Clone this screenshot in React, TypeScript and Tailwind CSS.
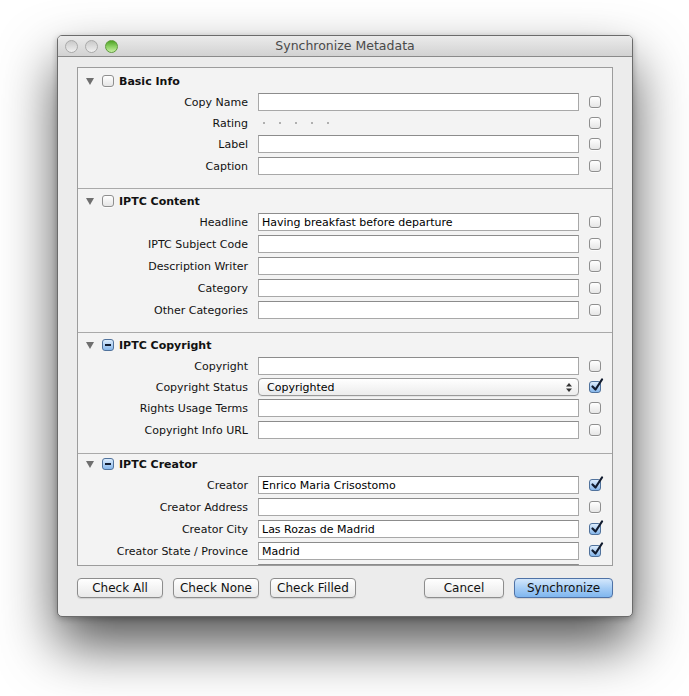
import React from "react";

type CS = "off" | "on" | "mixed";

function Check({ state = "off" }: { state?: CS }) {
  if (state === "off") {
    return (
      <div className="w-[12px] h-[12px] rounded-[3px] border border-[#8f8f8f] bg-gradient-to-b from-white to-[#e6e6e6] shadow-[0_1px_0_rgba(255,255,255,0.7)]" />
    );
  }
  return (
    <div className="relative w-[12px] h-[12px] rounded-[3px] border border-[#50729c] bg-gradient-to-b from-[#dcecfc] to-[#86b6ea]">
      {state === "on" ? (
        <svg className="absolute left-[1px] top-[-4px]" width="13" height="14" viewBox="0 0 13 14">
          <path d="M1.5 8.5 L4.5 11.5 L11 1.5" fill="none" stroke="#111b2e" strokeWidth="2.2" strokeLinecap="round" strokeLinejoin="round" />
        </svg>
      ) : (
        <div className="absolute left-[2px] top-[4px] w-[6px] h-[2px] bg-[#121c30]" />
      )}
    </div>
  );
}

function Tri() {
  return (
    <svg width="8" height="7" viewBox="0 0 8 7">
      <polygon points="0,0 8,0 4,7" fill="#6f6f6f" />
    </svg>
  );
}

function Input({ value = "" }: { value?: string }) {
  return (
    <div className="h-[18px] w-[321px] border border-[#a8a8a8] border-t-[#8c8c8c] bg-white text-[11px] leading-none px-[3px] flex items-center text-black">
      {value}
    </div>
  );
}

function Row({
  label,
  children,
  h = "h-[22px]",
  state = "off",
}: {
  label: string;
  children: React.ReactNode;
  h?: string;
  state?: CS;
}) {
  return (
    <div className={`flex items-center ${h}`}>
      <div className="w-[170px] text-right text-[11px] text-[#111] leading-none whitespace-nowrap">{label}</div>
      <div className="ml-[10px] w-[321px]">{children}</div>
      <div className="ml-[10px]">
        <Check state={state} />
      </div>
    </div>
  );
}

function Header({ title, state = "off" }: { title: string; state?: CS }) {
  return (
    <div className="flex items-center h-[20px] pl-[8px]">
      <Tri />
      <div className="ml-[8px]">
        <Check state={state} />
      </div>
      <div className="ml-[5px] text-[11px] font-bold text-[#111] leading-none">{title}</div>
    </div>
  );
}

function Btn({ children, w, primary = false }: { children: React.ReactNode; w: string; primary?: boolean }) {
  return (
    <div
      className={`${w} h-[20px] rounded-[4px] border flex items-center justify-center text-[12px] leading-none text-[#111] ${
        primary
          ? "border-[#4f72a6] bg-gradient-to-b from-[#d3e7fc] via-[#a6cdf5] to-[#7fb6ef]"
          : "border-[#8d8d8d] bg-gradient-to-b from-white to-[#e9e9e9]"
      } shadow-[0_1px_1px_rgba(0,0,0,0.12)]`}
    >
      {children}
    </div>
  );
}

export default function App() {
  return (
    <div
      className="w-[689px] h-[696px] bg-white overflow-hidden pt-[35px] pl-[57px]"
      style={{ fontFamily: '"DejaVu Sans", "Noto Sans", sans-serif' }}
    >
      <div className="w-[576px] h-[582px] rounded-[5px] border border-[#6b6b6b] bg-[#ececec] overflow-hidden shadow-[0_28px_55px_rgba(0,0,0,0.68),0_2px_6px_rgba(0,0,0,0.25)] flex flex-col">
        {/* Title bar */}
        <div className="relative h-[21px] shrink-0 bg-gradient-to-b from-[#ebebeb] to-[#d2d2d2] border-b border-[#8a8a8a] flex items-center">
          <div className="flex items-center gap-[7px] pl-[7px]">
            <div className="w-[13px] h-[13px] rounded-full border border-[#a9a9a9] bg-gradient-to-b from-[#c9c9c9] to-[#f0f0f0]" />
            <div className="w-[13px] h-[13px] rounded-full border border-[#a9a9a9] bg-gradient-to-b from-[#c9c9c9] to-[#f0f0f0]" />
            <div className="w-[13px] h-[13px] rounded-full border border-[#5f9a3d] bg-gradient-to-b from-[#4da321] via-[#8bd062] to-[#c7f0a2]" />
          </div>
          <div className="absolute inset-0 flex items-center justify-center text-[12.5px] text-[#4a4a4a] leading-none">
            Synchronize Metadata
          </div>
        </div>

        {/* Body */}
        <div className="flex-1 flex flex-col pl-[19px] pr-[19px] pt-[10px]">
          <div className="h-[499px] border border-[#9c9c9c] bg-[#f3f3f3] overflow-hidden">
            {/* Basic Info */}
            <div className="pt-[3px] pb-[11px] border-b border-[#a9a9a9]">
              <Header title="Basic Info" />
              <Row label="Copy Name">
                <Input />
              </Row>
              <Row label="Rating" h="h-[20px]">
                <div className="flex items-center gap-[14px] pl-[5px]">
                  {[0, 1, 2, 3, 4].map((i) => (
                    <div key={i} className="w-[2px] h-[2px] rounded-full bg-[#9a9a9a]" />
                  ))}
                </div>
              </Row>
              <Row label="Label">
                <Input />
              </Row>
              <Row label="Caption">
                <Input />
              </Row>
            </div>

            {/* IPTC Content */}
            <div className="pt-[2px] pb-[11px] border-b border-[#a9a9a9]">
              <Header title="IPTC Content" />
              <Row label="Headline">
                <Input value="Having breakfast before departure" />
              </Row>
              <Row label="IPTC Subject Code">
                <Input />
              </Row>
              <Row label="Description Writer">
                <Input />
              </Row>
              <Row label="Category">
                <Input />
              </Row>
              <Row label="Other Categories">
                <Input />
              </Row>
            </div>

            {/* IPTC Copyright */}
            <div className="pt-[2px] pb-[12px] border-b border-[#a9a9a9]">
              <Header title="IPTC Copyright" state="mixed" />
              <Row label="Copyright">
                <Input />
              </Row>
              <Row label="Copyright Status" h="h-[20px]" state="on">
                <div className="relative h-[18px] w-[321px] rounded-[4px] border border-[#9a9a9a] bg-gradient-to-b from-white to-[#ececec] text-[11px] leading-none pl-[8px] flex items-center text-black shadow-[0_1px_0_rgba(0,0,0,0.06)]">
                  Copyrighted
                  <svg className="absolute right-[6px] top-[4px]" width="6" height="9" viewBox="0 0 6 9">
                    <polygon points="3,0 6,3.5 0,3.5" fill="#333" />
                    <polygon points="0,5.5 6,5.5 3,9" fill="#333" />
                  </svg>
                </div>
              </Row>
              <Row label="Rights Usage Terms">
                <Input />
              </Row>
              <Row label="Copyright Info URL">
                <Input />
              </Row>
            </div>

            {/* IPTC Creator */}
            <div>
              <Header title="IPTC Creator" state="mixed" />
              <Row label="Creator" state="on">
                <Input value="Enrico Maria Crisostomo" />
              </Row>
              <Row label="Creator Address">
                <Input />
              </Row>
              <Row label="Creator City" state="on">
                <Input value="Las Rozas de Madrid" />
              </Row>
              <Row label="Creator State / Province" state="on">
                <Input value="Madrid" />
              </Row>
              <Row label="">
                <Input />
              </Row>
            </div>
          </div>

          {/* Buttons */}
          <div className="flex items-center mt-[12px]">
            <Btn w="w-[86px]">Check All</Btn>
            <div className="ml-[10px]">
              <Btn w="w-[86px]">Check None</Btn>
            </div>
            <div className="ml-[11px]">
              <Btn w="w-[86px]">Check Filled</Btn>
            </div>
            <div className="ml-auto">
              <Btn w="w-[80px]">Cancel</Btn>
            </div>
            <div className="ml-[10px]">
              <Btn w="w-[99px]" primary>
                Synchronize
              </Btn>
            </div>
          </div>
        </div>
      </div>
    </div>
  );
}
